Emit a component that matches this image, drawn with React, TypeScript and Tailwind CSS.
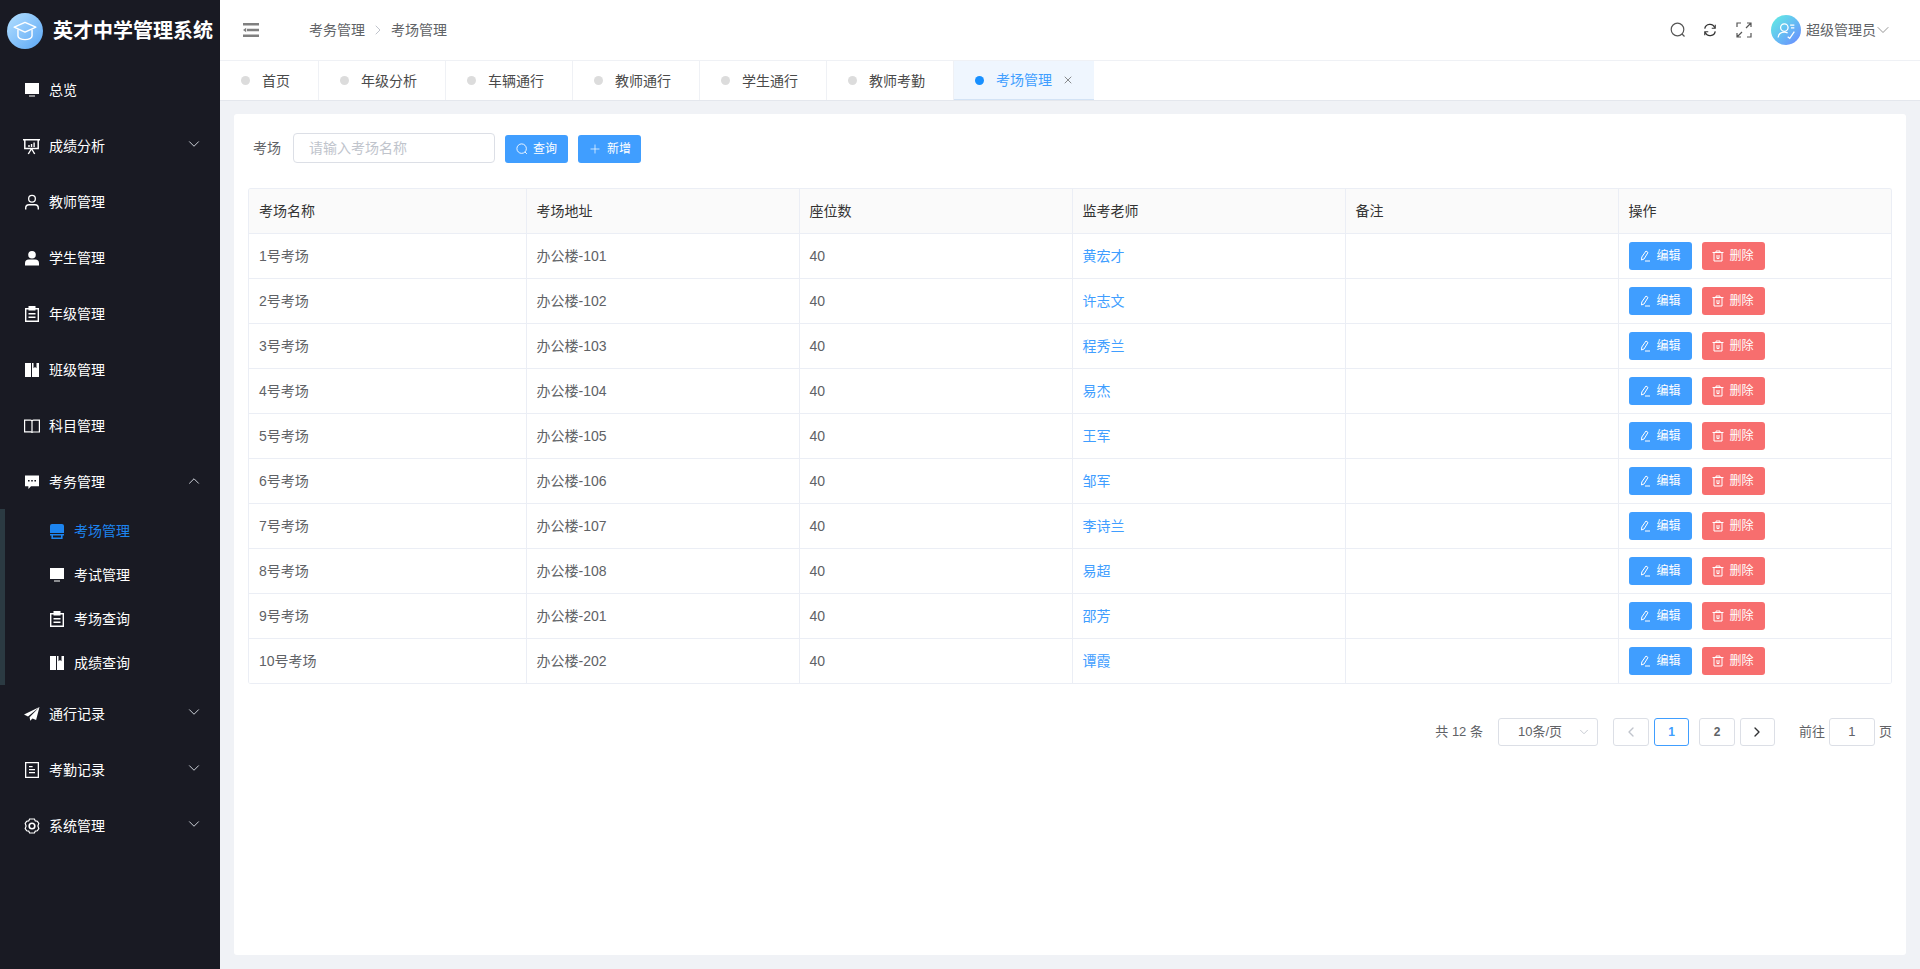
import { ChevronDown, ChevronLeft, ChevronRight, ChevronUp, Plus, X } from 'lucide-react';
import type { ReactNode } from 'react';

const font = 'font-["Liberation_Sans","Noto_Sans_CJK_SC",sans-serif]';

function Icon({ className = 'w-4 h-4', children }: { className?: string; children: ReactNode }) {
  return (
    <svg viewBox="0 0 16 16" className={className} fill="currentColor">
      {children}
    </svg>
  );
}

const MonitorIcon = () => (
  <Icon>
    <path d="M1 1h14v11H1zM5 13.400h6V14.600H5z" />
  </Icon>
);
const BoardIcon = () => (
  <svg viewBox="0 0 16 16" className="w-[18px] h-[18px] -ml-px" fill="currentColor">
    <path
      fillRule="evenodd"
      d="M0 1.500h16v1.400h-1V11H9l2.600 4.200-1.200.6L8.200 12H7.800l-2.200 3.800-1.200-.6L7 11H1V2.900H0zM2.400 2.900v6.800h11.200V2.900z"
    />
    <path d="M5 7h1.300v2H5zM7.400 6h1.300v3H7.400zM9.800 4.600h1.300V9H9.800z" />
  </svg>
);
const UserLineIcon = () => (
  <Icon>
    <path
      fillRule="evenodd"
      d="M8 .8a4 4 0 110 8 4 4 0 010-8zm0 1.300a2.700 2.700 0 100 5.400 2.700 2.700 0 000-5.400z"
    />
    <path d="M1 15.500V14a4 4 0 014-4h6a4 4 0 014 4v1.500h-1.400V14A2.600 2.600 0 0011 11.400H5A2.600 2.600 0 002.400 14v1.500z" />
  </Icon>
);
const UserFillIcon = () => (
  <Icon>
    <circle cx="8" cy="4.800" r="3.800" />
    <path d="M1 15.500v-2.200A3.800 3.800 0 014.800 9.600h6.400a3.800 3.800 0 013.800 3.700v2.200z" />
  </Icon>
);
const ClipboardIcon = () => (
  <Icon>
    <path
      fillRule="evenodd"
      d="M4.500 0h7v2H15v14H1V2h3.500zM2.400 3.400v11.200h11.200V3.400h-2.100v1H4.500v-1zM4.500 7v1.400h7V7zm0 3.500v1.400h7v-1.400z"
    />
  </Icon>
);
const BookIcon = () => (
  <Icon>
    <path fillRule="evenodd" d="M1 1h6v14H1zM8 1h1.500v5.200l1.500-1.200 1.500 1.200V1H15v14H8z" />
  </Icon>
);
const OpenBookIcon = () => (
  <Icon>
    <path
      fillRule="evenodd"
      d="M0 1.500h6.500c.6 0 1.100.2 1.500.6.400-.4.900-.6 1.500-.6H16v13H9.500c-.6 0-1.100.2-1.500.6-.4-.4-.9-.6-1.500-.6H0zm1.200 1.200v10.600h5.300c.4 0 .7.1.9.2V3.600c0-.5-.4-.9-.9-.9zm7.400.9v10.200c.2-.1.500-.2.900-.2h5.300V2.700H9.500c-.5 0-.9.4-.9.900z"
    />
  </Icon>
);
const ChatIcon = () => (
  <Icon>
    <path
      fillRule="evenodd"
      d="M1 1.500h14v10.800H7l-2.600 2.600v-2.600H1zM4 6v1.600h1.600V6zm3.200 0v1.600h1.600V6zm3.200 0v1.600H12V6z"
    />
  </Icon>
);
const SendIcon = () => (
  <Icon>
    <path d="M15.500 1L0 8.600l4 1.800zM15.500 1L5.600 11.200l.6 3.600 2.300-2.400 3.600 1.600z" />
  </Icon>
);
const DocIcon = () => (
  <Icon>
    <path
      fillRule="evenodd"
      d="M1 0h14v16H1zm1.300 1.300v13.400h11.400V1.300zM5 4h3.600v1.300H5zm0 3h6v1.300H5zm0 3h6v1.300H5z"
    />
  </Icon>
);
const GearIcon = () => (
  <svg viewBox="0 0 16 16" className="w-4 h-4" fill="none" stroke="currentColor" strokeWidth="1.200">
    <path d="M5.600 1h4.800l.9 1.900 2 .3 1.500 2.200-.9 2.600.9 2.600-1.500 2.200-2 .3-.9 1.900H5.600l-.9-1.900-2-.3L1.200 10.600l.9-2.600-.9-2.600 1.500-2.200 2-.3z" />
    <circle cx="8" cy="8" r="2.800" strokeWidth="1.600" />
  </svg>
);
const SeatIcon = () => (
  <Icon>
    <path d="M3 1h10a2 2 0 012 2v7H1V3a2 2 0 012-2zM1 11h14v1.400h-1.400V16H2.400v-3.600H1zm3 1.400v2.200h8v-2.200z" />
  </Icon>
);
const SearchIcon = ({ className }: { className: string }) => (
  <svg viewBox="0 0 16 16" className={className} fill="none" stroke="currentColor" strokeWidth="1.200">
    <circle cx="7.500" cy="7.500" r="6.300" />
    <path d="M12 12l2.500 2.500" />
  </svg>
);

type MenuItem = { label: string; icon: ReactNode; arrow?: 'down' | 'up' };

const topMenu: MenuItem[] = [
  { label: '总览', icon: <MonitorIcon /> },
  { label: '成绩分析', icon: <BoardIcon />, arrow: 'down' },
  { label: '教师管理', icon: <UserLineIcon /> },
  { label: '学生管理', icon: <UserFillIcon /> },
  { label: '年级管理', icon: <ClipboardIcon /> },
  { label: '班级管理', icon: <BookIcon /> },
  { label: '科目管理', icon: <OpenBookIcon /> },
  { label: '考务管理', icon: <ChatIcon />, arrow: 'up' },
];

const subMenu = [
  { label: '考场管理', icon: <SeatIcon />, active: true },
  { label: '考试管理', icon: <MonitorIcon /> },
  { label: '考场查询', icon: <ClipboardIcon /> },
  { label: '成绩查询', icon: <BookIcon /> },
];

const bottomMenu: MenuItem[] = [
  { label: '通行记录', icon: <SendIcon />, arrow: 'down' },
  { label: '考勤记录', icon: <DocIcon />, arrow: 'down' },
  { label: '系统管理', icon: <GearIcon />, arrow: 'down' },
];

const tabs = ['首页', '年级分析', '车辆通行', '教师通行', '学生通行', '教师考勤'];

const rows = [
  ['1号考场', '办公楼-101', '黄宏才'],
  ['2号考场', '办公楼-102', '许志文'],
  ['3号考场', '办公楼-103', '程秀兰'],
  ['4号考场', '办公楼-104', '易杰'],
  ['5号考场', '办公楼-105', '王军'],
  ['6号考场', '办公楼-106', '邹军'],
  ['7号考场', '办公楼-107', '李诗兰'],
  ['8号考场', '办公楼-108', '易超'],
  ['9号考场', '办公楼-201', '邵芳'],
  ['10号考场', '办公楼-202', '谭霞'],
];

function MenuRow({ item }: { item: MenuItem }) {
  return (
    <div className="h-14 flex items-center pl-[24px] pr-[17px] text-white">
      <span className="w-4 h-4 mr-[9px] shrink-0 flex items-center">{item.icon}</span>
      <span className="text-sm flex-1">{item.label}</span>
      {item.arrow === 'down' && <ChevronDown className="w-[18px] h-[18px] -mt-[5px] text-gray-300" strokeWidth={1.300} />}
      {item.arrow === 'up' && <ChevronUp className="w-[18px] h-[18px] -mt-[3px] text-gray-300" strokeWidth={1.300} />}
    </div>
  );
}

function Sidebar() {
  return (
    <aside className="w-[220px] shrink-0 bg-[#191a23] h-full">
      <div className="h-[62px] flex items-start pt-[13px] pl-[7px]">
        <div className="w-9 h-9 rounded-full bg-gradient-to-br from-[#b4e0ff] to-[#5aa6f4] flex items-center justify-center">
          <svg viewBox="0 0 24 24" className="w-[26px] h-[26px] text-white" fill="none" stroke="currentColor" strokeWidth="1.300">
            <path d="M12 4L2 8.500 12 13l10-4.500z" strokeLinejoin="round" />
            <path d="M5.500 10.500v6c0 2 3 3.500 6.500 3.500s6.500-1.500 6.500-3.500v-6" />
          </svg>
        </div>
        <span className="ml-[10px] mt-[7px] text-xl leading-[22px] font-bold text-white whitespace-nowrap">英才中学管理系统</span>
      </div>
      {topMenu.map((item) => (
        <MenuRow key={item.label} item={item} />
      ))}
      <div className="border-l-[5px] border-[#2b3a42] -mt-px mb-px">
        {subMenu.map((sub) => (
          <div
            key={sub.label}
            className={`h-11 flex items-center pl-[44px] ${sub.active ? 'text-[#1d85f0]' : 'text-white'}`}
          >
            <span className="w-4 h-4 mr-[9px] shrink-0 flex items-center">{sub.icon}</span>
            <span className="text-sm">{sub.label}</span>
          </div>
        ))}
      </div>
      {bottomMenu.map((item) => (
        <MenuRow key={item.label} item={item} />
      ))}
    </aside>
  );
}

function Header() {
  return (
    <header className="h-[61px] shrink-0 flex items-center border-b border-[#eff1f5] bg-white text-[#606266]">
      <svg viewBox="0 0 16 14" className="w-4 h-[14px] ml-[23px] text-[#808080]" fill="currentColor">
        <path d="M0 0h16v2.500H0zM4 5.800h12v2.400H4zM0 11.500h16V14H0zM0 7l3.200-2.200v4.400z" />
      </svg>
      <nav className="ml-[50px] flex items-center text-sm">
        <span>考务管理</span>
        <ChevronRight className="w-4 h-4 mx-[5px] text-[#c0c4cc]" strokeWidth={1.500} />
        <span>考场管理</span>
      </nav>
      <div className="ml-auto flex items-center pr-[27px]">
        <SearchIcon className="w-4 h-4 text-[#555]" />
        <svg viewBox="0 0 16 16" className="w-[14px] h-[14px] ml-[17px] text-[#333]" fill="none" stroke="currentColor" strokeWidth="1.500">
          <path d="M2 6.500A6 6 0 0113.500 5.500M14 9.500A6 6 0 012.500 10.500" />
          <path d="M14 2v4h-4M2 14v-4h4" strokeWidth="1.200" />
        </svg>
        <svg viewBox="0 0 16 16" className="w-4 h-4 ml-[19px] text-[#555]" fill="none" stroke="currentColor" strokeWidth="1.200">
          <path d="M1 5V1h4M11 1h4v4M15 11v4h-4M5 15H1v-4M10 6l4.500-4.500M6 10l-4.500 4.500" />
        </svg>
        <div className="ml-[19px] w-[30px] h-[30px] rounded-full bg-gradient-to-br from-[#5ff0e0] to-[#6a86ff] flex items-center justify-center">
          <svg viewBox="0 0 24 24" className="w-5 h-5 text-white" fill="none" stroke="currentColor" strokeWidth="1.500">
            <circle cx="10" cy="9" r="4.500" />
            <path d="M2.500 21c.5-4 3.500-6.500 7.500-6.500 1.500 0 2.800.4 4 1.200M14 20l2.500 2L22 14M17 6h5M18 9.500h4" />
          </svg>
        </div>
        <span className="ml-[5px] text-sm">超级管理员</span>
        <ChevronDown className="w-5 h-5 -ml-[3px] text-[#808080]" strokeWidth={1} />
      </div>
    </header>
  );
}

function TabBar() {
  return (
    <div className="h-10 shrink-0 flex bg-white border-b border-[#e4e7ed] text-[#4a4a4a] text-sm">
      {tabs.map((tab) => (
        <div key={tab} className="flex items-center pl-[21px] pr-[28px] border-r border-[#eff1f5]">
          <span className="w-[9px] h-[9px] rounded-full bg-[#dcdcdc] mr-3" />
          {tab}
        </div>
      ))}
      <div className="flex items-center pl-[21px] pr-5 bg-[#eff6fe] border-b border-[#d3e3f5] text-[#409eff]">
        <span className="w-[9px] h-[9px] rounded-full bg-[#1890ff] mr-3" />
        考场管理
        <X className="w-3 h-3 ml-[10px] text-[#666]" strokeWidth={1.500} />
      </div>
    </div>
  );
}

function ActionButton({ color, icon, label, className = '' }: { color: string; icon: ReactNode; label: string; className?: string }) {
  return (
    <button className={`h-7 w-[63px] rounded-[3px] flex items-center justify-center gap-[5px] text-xs text-white ${color} ${className}`}>
      {icon}
      {label}
    </button>
  );
}

const EditIcon = () => (
  <svg viewBox="0 0 12 12" className="w-3 h-3" fill="none" stroke="currentColor" strokeWidth="1">
    <path d="M7 1l2 1.500-4 6.500-2.500 1L2.800 7zM6 11h5" />
  </svg>
);
const TrashIcon = () => (
  <svg viewBox="0 0 12 12" className="w-3 h-3" fill="none" stroke="currentColor" strokeWidth="1">
    <path d="M.5 2.500h11M4 2.500V1h4v1.500M2 2.500V11h8V2.500M5 5v3.500h2V5" />
  </svg>
);

function DataTable() {
  const th = 'font-normal text-left pl-[10px] border-r border-b border-[#ebeef5] last:border-r-0';
  const td = 'pl-[10px] border-r border-b border-[#ebeef5] last:border-r-0';
  return (
    <div className="mt-[25px] border border-b-0 border-[#ebeef5] rounded-[3px] overflow-hidden">
      <table className="w-full table-fixed border-collapse text-sm">
        <colgroup>
          <col className="w-[277px]" />
          <col className="w-[273px]" />
          <col className="w-[273px]" />
          <col className="w-[273px]" />
          <col className="w-[273px]" />
          <col />
        </colgroup>
        <thead>
          <tr className="h-[44px] bg-[#fafafa] text-[#333]">
            {['考场名称', '考场地址', '座位数', '监考老师', '备注', '操作'].map((h) => (
              <th key={h} className={th}>
                {h}
              </th>
            ))}
          </tr>
        </thead>
        <tbody>
          {rows.map(([name, addr, teacher]) => (
            <tr key={name} className="h-[45px] text-[#606266]">
              <td className={td}>{name}</td>
              <td className={td}>{addr}</td>
              <td className={td}>40</td>
              <td className={`${td} text-[#409eff]`}>{teacher}</td>
              <td className={td} />
              <td className={td}>
                <div className="flex gap-[10px]">
                  <ActionButton color="bg-[#409eff]" icon={<EditIcon />} label="编辑" />
                  <ActionButton color="bg-[#f76e6e]" icon={<TrashIcon />} label="删除" />
                </div>
              </td>
            </tr>
          ))}
        </tbody>
      </table>
    </div>
  );
}

function Pagination() {
  const box = 'h-7 border border-[#dcdfe6] rounded-[3px] flex items-center justify-center';
  return (
    <div className="mt-[34px] flex items-center justify-end text-[13px] text-[#606266]">
      <span>共 12 条</span>
      <div className={`${box} w-[100px] ml-[15px] relative`}>
        <span className="mr-[16px]">10条/页</span>
        <ChevronDown className="w-[14px] h-[14px] text-[#c0c4cc] absolute right-[6px]" strokeWidth={1.500} />
      </div>
      <div className={`${box} w-[36px] ml-[15px] text-[#c0c4cc]`}>
        <ChevronLeft className="w-4 h-4" strokeWidth={2} />
      </div>
      <div className={`${box} w-[35px] ml-[5px] !border-[#409eff] text-[#409eff] font-bold text-xs`}>1</div>
      <div className={`${box} w-[36px] ml-[10px] font-bold text-xs`}>2</div>
      <div className={`${box} w-[35px] ml-[5px] text-[#303133]`}>
        <ChevronRight className="w-4 h-4" strokeWidth={2} />
      </div>
      <span className="ml-6">前往</span>
      <div className={`${box} w-[46px] ml-[4px]`}>1</div>
      <span className="ml-1">页</span>
    </div>
  );
}

export default function App() {
  return (
    <div className={`h-screen w-full flex overflow-hidden bg-[#f0f2f6] ${font}`}>
      <Sidebar />
      <main className="flex-1 min-w-0 flex flex-col">
        <Header />
        <TabBar />
        <div className="flex-1 pt-[13px] px-[14px] pb-[14px]">
          <section className="h-full bg-white rounded-[3px] px-[14px] pt-[19px]">
            <div className="flex items-center text-sm text-[#606266]">
              <label className="ml-[5px]">考场</label>
              <div className="ml-3 w-[202px] h-[30px] border border-[#dcdfe6] rounded-[4px] flex items-center pl-[15px] text-[#c0c4cc]">
                请输入考场名称
              </div>
              <ActionButton color="bg-[#409eff]" className="ml-[10px] mt-[2px]" icon={<SearchIcon className="w-3 h-3" />} label="查询" />
              <ActionButton color="bg-[#409eff]" className="ml-[10px] mt-[2px]" icon={<Plus className="w-[14px] h-[14px]" strokeWidth={1.200} />} label="新增" />
            </div>
            <DataTable />
            <Pagination />
          </section>
        </div>
      </main>
    </div>
  );
}
